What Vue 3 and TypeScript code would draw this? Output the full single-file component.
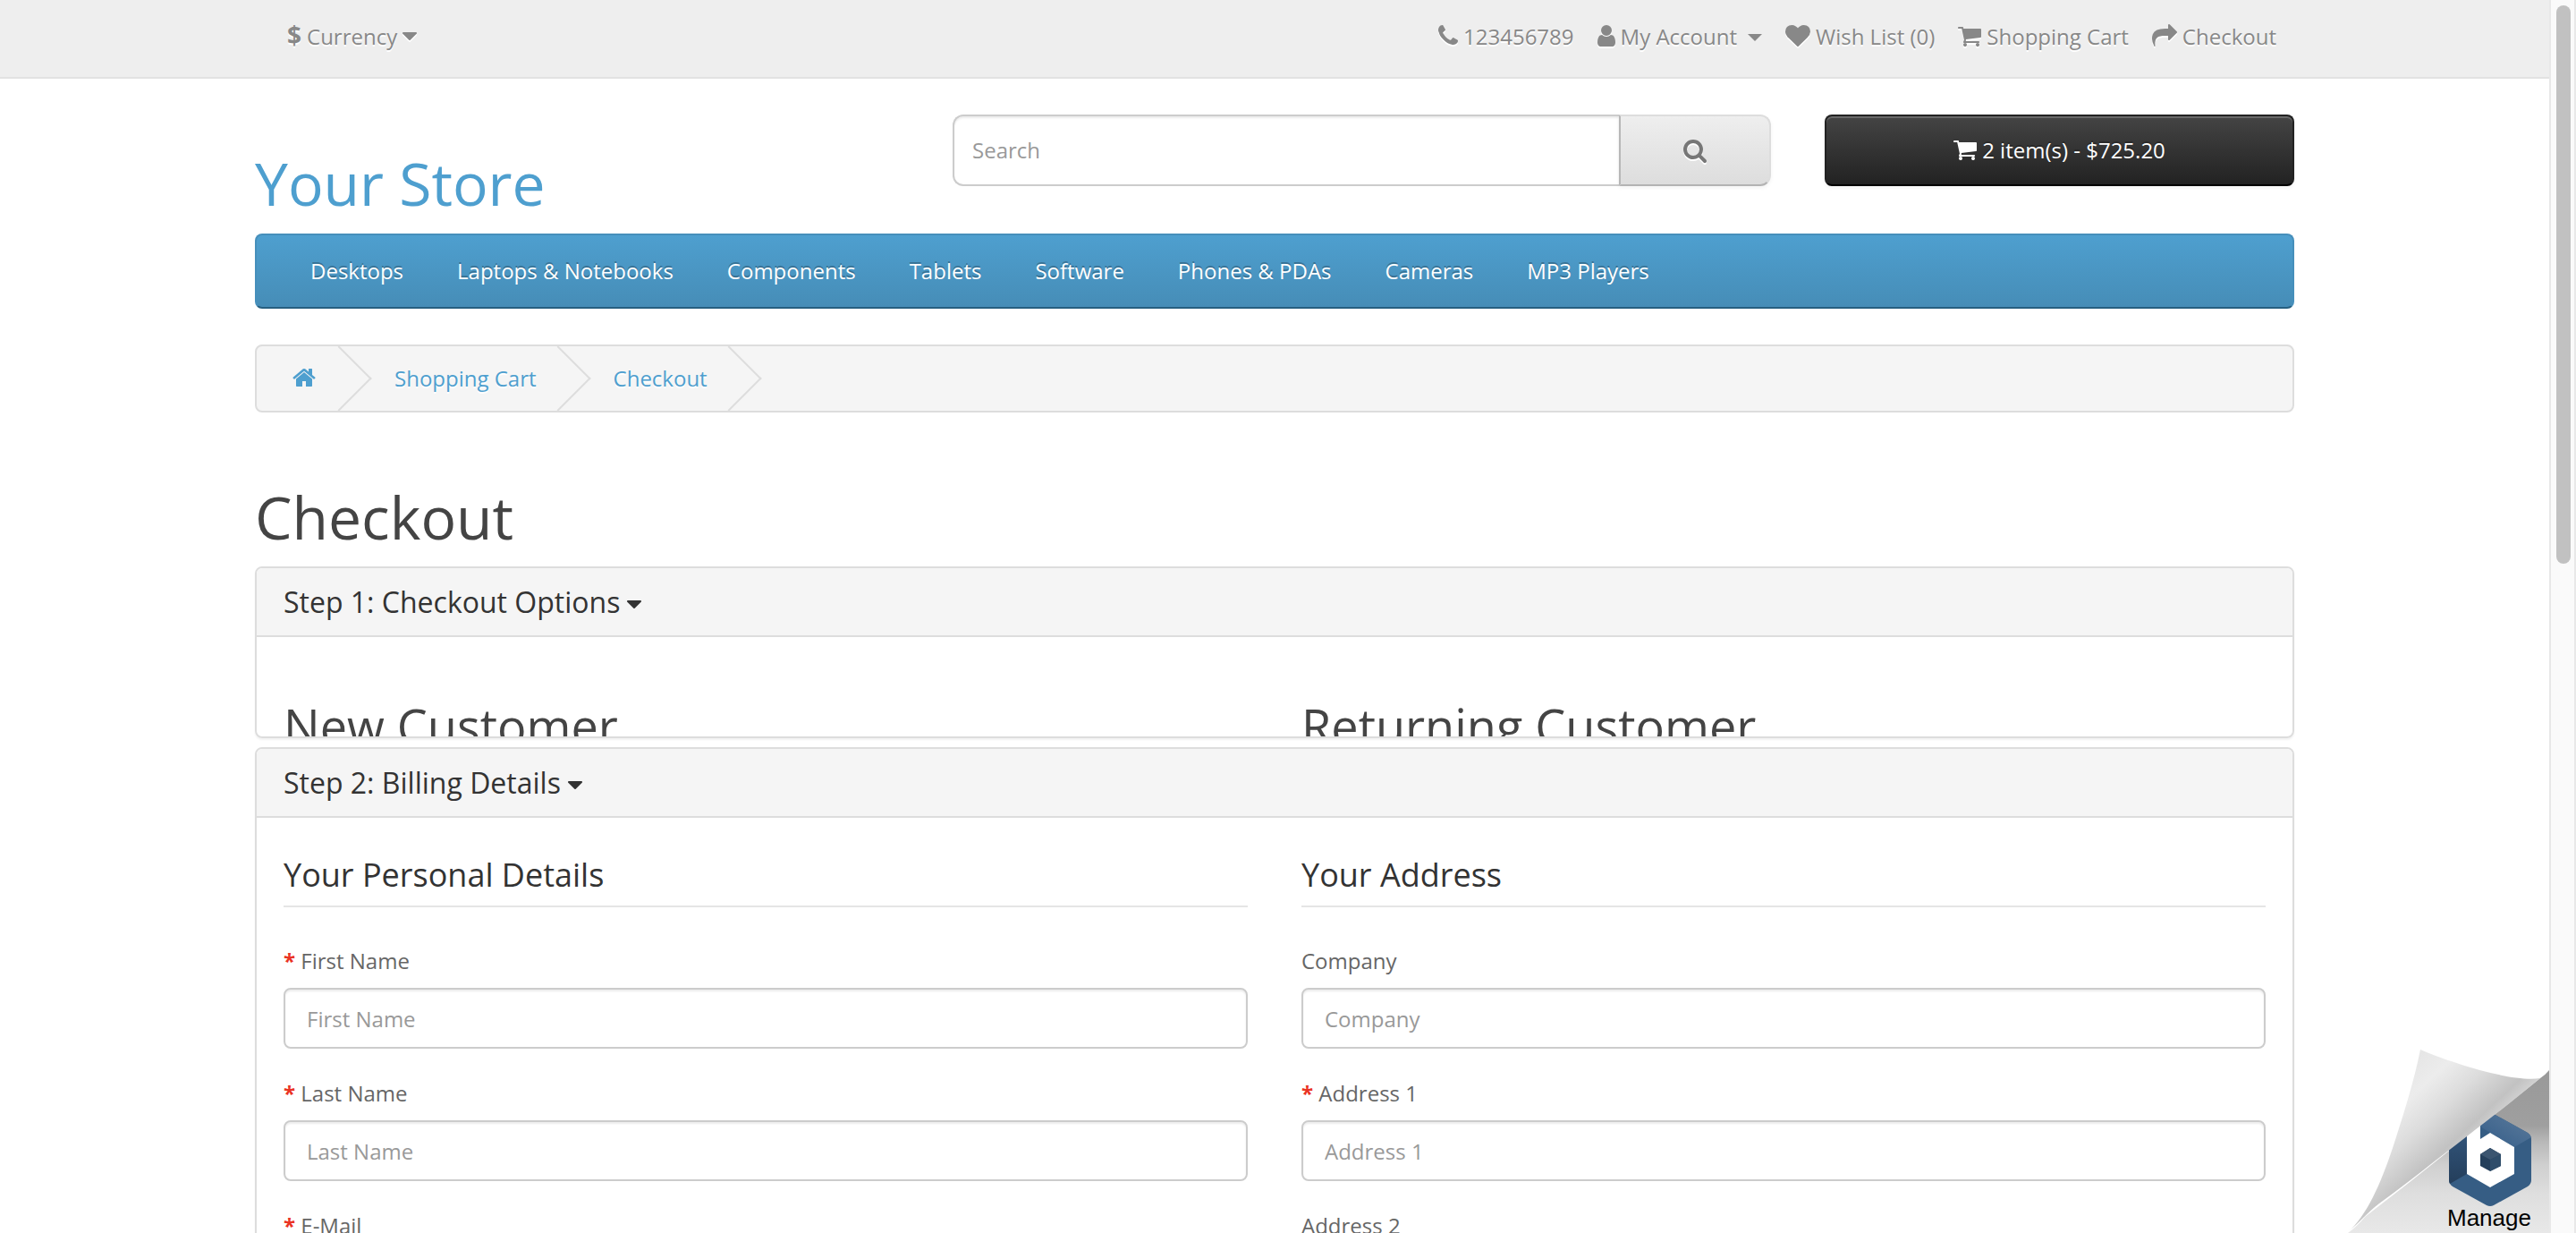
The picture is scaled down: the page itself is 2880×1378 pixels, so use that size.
<script setup lang="ts">
import { h, type FunctionalComponent } from 'vue'

interface Glyph {
  x: number
  w: number
  d: string
}

interface Field {
  id: string
  label: string
  type: string
  required: boolean
}

const glyphs: Record<string, Glyph> = {
  phone: {
    x: 192,
    w: 22,
    d: 'M1600 1240q0 27-10 70.500t-21 68.500q-21 50-122 106-94 51-186 51-27 0-53-3.500t-57-12.500-47-14.500-55.500-20.500-49.500-18q-98-35-175-83-127-79-264-216t-216-264q-48-77-83-175-3-9-18-49.500t-20.500-55.500-14.500-47-12.500-57-3.500-53q0-92 51-186 56-101 106-122 25-11 68.500-21t70.500-10q14 0 21 3 18 6 53 76 11 19 30 54t35 63.500 31 53.500q3 4 17.500 25t21.500 35.500 7 28.500q0 20-28.500 50t-62 55-62 53-28.500 46q0 9 5 22.500t8.500 20.500 14 24 11.500 19q76 137 174 235t235 174q2 1 19 11.500t24 14 20.500 8.500 22.500 5q18 0 46-28.500t53-62 55-62 50-28.500q14 0 28.500 7t35.500 21.500 25 17.500q25 15 53.500 31t63.500 35 54 30q70 35 76 53 3 7 3 21z',
  },
  user: {
    x: 256,
    w: 20,
    d: 'M1536 1399q0 109-62.500 187t-150.500 78h-854q-88 0-150.500-78t-62.500-187q0-85 8.500-160.500t31.500-152 58.500-131 94-89 134.500-34.500q131 128 313 128t313-128q76 0 134.500 34.500t94 89 58.500 131 31.500 152 8.500 160.500zm-256-887q0 159-112.500 271.500t-271.500 112.500-271.500-112.500-112.500-271.500 112.500-271.500 271.500-112.500 271.500 112.500 112.500 271.500z',
  },
  heart: {
    x: 0,
    w: 28,
    d: 'M896 1664q-26 0-44-18l-624-602q-10-8-27.500-26t-55.500-65.500-68-97.500-53.500-121-23.500-138q0-220 127-344t351-124q62 0 126.500 21.500t120 58 95.500 68.500 76 68q36-36 76-68t95.500-68.500 120-58 126.500-21.500q224 0 351 124t127 344q0 221-229 450l-623 600q-18 18-44 18z',
  },
  cart: {
    x: 64,
    w: 26,
    d: 'M704 1536q0 52-38 90t-90 38-90-38-38-90 38-90 90-38 90 38 38 90zm896 0q0 52-38 90t-90 38-90-38-38-90 38-90 90-38 90 38 38 90zm128-1088v512q0 24-16.500 42.500t-40.500 21.500l-1044 122q13 60 13 70 0 16-24 64h920q26 0 45 19t19 45-19 45-45 19h-1024q-26 0-45-19t-19-45q0-11 8-31.500t16-36 21.500-40 15.500-29.500l-177-823h-204q-26 0-45-19t-19-45 19-45 45-19h256q16 0 28.500 6.500t19.500 15.500 13 24.500 8 26 5.500 29.500 4.500 26h1201q26 0 45 19t19 45z',
  },
  share: {
    x: 0,
    w: 28,
    d: 'M1792 640q0 26-19 45l-512 512q-19 19-45 19t-45-19-19-45v-256h-224q-98 0-175.500 6t-154 21.500-133 42.500-105.500 69.500-80 101-48.500 138.500-17.500 181q0 55 5 123 0 6 2.500 23.500t2.500 26.500q0 15-8.500 25t-23.500 10q-16 0-28-17-7-9-13-22t-13.500-30-10.500-24q-127-285-127-451 0-199 53-333 162-403 875-403h224v-256q0-26 19-45t45-19 45 19l512 512q19 19 19 45z',
  },
  search: {
    x: 64,
    w: 26,
    d: 'M1216 832q0-185-131.500-316.500t-316.500-131.500-316.500 131.500-131.500 316.500 131.500 316.500 316.500 131.500 316.500-131.500 131.500-316.500zm512 832q0 52-38 90t-90 38q-54 0-90-38l-343-342q-179 124-399 124-143 0-273.500-55.500t-225-150-150-225-55.500-273.500 55.500-273.500 150-225 225-150 273.500-55.500 273.500 55.500 225 150 150 225 55.500 273.500q0 220-124 399l343 343q37 37 37 90z',
  },
  home: {
    x: 64,
    w: 28,
    d: 'M1472 992v480q0 26-19 45t-45 19h-384v-384h-256v384h-384q-26 0-45-19t-19-45v-480q0-1 .5-3t.5-3l575-474 575 474q1 2 1 6zm223-69l-62 74q-8 9-21 11h-3q-13 0-21-7l-692-577-692 577q-12 8-24 7-13-2-21-11l-62-74q-8-10-7-23.500t11-21.500l719-599q32-26 76-26t76 26l244 204v-195q0-14 9-23t23-9h192q14 0 23 9t9 23v408l219 182q10 8 11 21.500t-7 23.500z',
  },
  caret: {
    x: 384,
    w: 16,
    d: 'M1408 704q0 26-19 45l-448 448q-19 19-45 19t-45-19l-448-448q-19-19-19-45t19-45 45-19h896q26 0 45 19t19 45z',
  },
}

const Icon: FunctionalComponent<{ name: string }> = (props) => {
  const g = glyphs[props.name]
  return h(
    'svg',
    {
      class: 'icon',
      width: g.w,
      height: 28,
      viewBox: `${g.x} 0 ${g.w * 64} 1792`,
      'aria-hidden': 'true',
    },
    [h('path', { d: g.d })],
  )
}
Icon.props = ['name']

const topLinks = [
  { icon: 'phone', text: '123456789', menu: false },
  { icon: 'user', text: 'My Account', menu: true },
  { icon: 'heart', text: 'Wish List (0)', menu: false },
  { icon: 'cart', text: 'Shopping Cart', menu: false },
  { icon: 'share', text: 'Checkout', menu: false },
]

const categories = [
  'Desktops',
  'Laptops & Notebooks',
  'Components',
  'Tablets',
  'Software',
  'Phones & PDAs',
  'Cameras',
  'MP3 Players',
]

const billing: { legend: string; fields: Field[] }[] = [
  {
    legend: 'Your Personal Details',
    fields: [
      { id: 'firstname', label: 'First Name', type: 'text', required: true },
      { id: 'lastname', label: 'Last Name', type: 'text', required: true },
      { id: 'email', label: 'E-Mail', type: 'email', required: true },
    ],
  },
  {
    legend: 'Your Address',
    fields: [
      { id: 'company', label: 'Company', type: 'text', required: false },
      { id: 'address-1', label: 'Address 1', type: 'text', required: true },
      { id: 'address-2', label: 'Address 2', type: 'text', required: false },
    ],
  },
]
</script>

<template>
  <div class="shell">
    <div class="page">
      <nav class="top">
        <div class="container top-row">
          <button type="button" class="currency">
            <strong>$</strong><span>Currency</span><Icon name="caret" />
          </button>
          <ul class="top-links">
            <li v-for="link in topLinks" :key="link.text">
              <a href="#"><Icon :name="link.icon" /><span>{{ link.text }}</span><i v-if="link.menu" class="menu-caret"></i></a>
            </li>
          </ul>
        </div>
      </nav>

      <header class="container header">
        <h1 class="logo"><a href="#">Your Store</a></h1>
        <form class="search" @submit.prevent>
          <input type="text" placeholder="Search" aria-label="Search" />
          <button type="submit" aria-label="Search"><Icon name="search" /></button>
        </form>
        <button type="button" class="cart"><Icon name="cart" /><span>2 item(s) - $725.20</span></button>
      </header>

      <div class="container">
        <nav class="menu">
          <a v-for="name in categories" :key="name" href="#">{{ name }}</a>
        </nav>

        <ul class="breadcrumb">
          <li><a href="#" aria-label="Home"><Icon name="home" /></a></li>
          <li><a href="#">Shopping Cart</a></li>
          <li><a href="#">Checkout</a></li>
        </ul>

        <h1 class="title">Checkout</h1>

        <section class="panel">
          <h4 class="panel-heading"><a href="#">Step 1: Checkout Options<Icon name="caret" /></a></h4>
          <div class="panel-body columns collapsing">
            <h2>New Customer</h2>
            <h2>Returning Customer</h2>
          </div>
        </section>

        <section class="panel">
          <h4 class="panel-heading"><a href="#">Step 2: Billing Details<Icon name="caret" /></a></h4>
          <form class="panel-body columns" @submit.prevent>
            <fieldset v-for="group in billing" :key="group.legend">
              <legend>{{ group.legend }}</legend>
              <div v-for="field in group.fields" :key="field.id" class="field">
                <label :for="field.id" :class="{ required: field.required }">{{ field.label }}</label>
                <input :id="field.id" :type="field.type" :placeholder="field.label" />
              </div>
            </fieldset>
          </form>
        </section>
      </div>
    </div>

    <div class="rail" aria-hidden="true"><div class="thumb"></div></div>

    <button type="button" class="manage">
      <svg width="226" height="206" viewBox="0 0 226 206">
        <defs>
          <linearGradient id="under" x1="0" y1="0" x2="0" y2="1">
            <stop offset="0" stop-color="#999" />
            <stop offset=".34" stop-color="#9f9f9f" />
            <stop offset=".44" stop-color="#b8b8b8" />
            <stop offset=".58" stop-color="#cfcfcf" />
            <stop offset=".76" stop-color="#dedede" />
            <stop offset="1" stop-color="#e8e8e8" />
          </linearGradient>
          <linearGradient id="peel" gradientUnits="userSpaceOnUse" x1="68" y1="20" x2="142" y2="100">
            <stop offset="0" stop-color="#e6e6e6" />
            <stop offset=".25" stop-color="#ececec" />
            <stop offset=".55" stop-color="#dcdcdc" />
            <stop offset=".88" stop-color="#c2c2c2" />
            <stop offset="1" stop-color="#d0d0d0" />
          </linearGradient>
          <linearGradient id="hexTop" x1="0" y1="1" x2="1" y2="0">
            <stop offset="0" stop-color="#335c88" />
            <stop offset="1" stop-color="#5d7c9c" />
          </linearGradient>
          <linearGradient id="hexLeft" x1="0" y1="0" x2="0" y2="1">
            <stop offset="0" stop-color="#34587f" />
            <stop offset="1" stop-color="#243e5b" />
          </linearGradient>
        </defs>
        <path d="M216 33Q222 29 226 24V206H1Q12 198 20 188L69 150Z" fill="url(#under)" />
        <path d="M156 73Q160 71 164 73L202 94Q206 97 206 101V147Q206 151 202 154L164 175Q160 177 156 175L118 154Q114 151 114 147V101Q114 97 118 94Z" fill="#365d84" />
        <path d="M156 73Q160 71 164 73L202 94Q205 96 206 99L187 110 160 94 149 87V76Z" fill="url(#hexTop)" />
        <path d="M134 85V140L115 151Q114 149 114 147V101Q114 97 118 94Z" fill="url(#hexLeft)" />
        <path d="M134 80H149V101L160 94 187 110V140L160 155 134 140Z" fill="#fff" />
        <path d="M160 111L172 118V131L160 137 149 131V118Z" fill="#243f5b" />
        <path d="M160 124L172 118V131L160 137Z" fill="#2f4d6a" />
        <path d="M160 111L172 118 160 124 149 118Z" fill="#3b5570" />
        <path d="M82 1C120 17 186 38 216 33C190 55 160 78 134 98C100 124 70 148 36 173C24 182 14 194 1 205C22 187 38 150 51 111C63 74 74 40 82 1Z" fill="url(#peel)" />
        <text x="112" y="198">Manage</text>
      </svg>
    </button>
  </div>
</template>

<style>
body {
  margin: 0;
  overflow: hidden;
}
</style>

<style scoped>
.shell {
  position: relative;
  display: grid;
  grid-template-columns: minmax(0, 1fr) 30px;
  height: 100vh;
  background: #fff;
  color: #666;
  font: 24px/40px 'Open Sans', sans-serif;
}

.shell *,
.shell *::before,
.shell *::after {
  box-sizing: border-box;
}

.page {
  overflow-y: auto;
  scrollbar-width: none;
}

.container {
  max-width: 2340px;
  margin: 0 auto;
  padding: 0 30px;
}

a {
  color: inherit;
  text-decoration: none;
}

button,
input {
  margin: 0;
  font: inherit;
}

ul {
  margin: 0;
  padding: 0;
  list-style: none;
}

h1,
h2,
h4 {
  margin: 0;
  font-weight: 400;
}

.icon {
  display: inline-block;
  vertical-align: -4px;
  fill: currentColor;
}

/* top bar */
.top {
  padding: 21px 0 25px;
  border-bottom: 2px solid #e2e2e2;
  background: #eee;
  color: #888;
  text-shadow: 0 2px 0 #fff;
}

.top .icon {
  filter: drop-shadow(0 2px 0 #fff);
}

.top-row {
  display: flex;
  justify-content: space-between;
}

.currency {
  height: 40px;
  margin-left: 36px;
  padding: 0;
  border: 0;
  background: none;
  color: inherit;
  text-shadow: inherit;
}

.currency strong {
  font-size: 28px;
  line-height: 28px;
}

.currency span {
  margin: 0 6px;
}

.top-links {
  display: flex;
  gap: 26px;
  height: 40px;
  margin-right: 20px;
}

.top-links .icon,
.cart .icon {
  margin-right: 6px;
}

.menu-caret {
  display: inline-block;
  margin-left: 12px;
  border: 8px solid transparent;
  border-top-color: currentColor;
  border-bottom: 0;
  vertical-align: 4px;
}

/* header */
.header {
  display: grid;
  grid-template-columns: 4fr 5fr 3fr;
  padding: 40px 0 20px;
}

.header > * {
  margin: 0 30px;
}

.header .logo {
  margin-top: 40px;
  color: #4e9fcf;
  font-size: 66px;
  line-height: 73px;
}

.title {
  margin: 80px 0 20px;
  color: #444;
  font-size: 66px;
  line-height: 72px;
}

.search {
  display: flex;
  height: 80px;
}

.search input {
  flex: 1;
  min-width: 0;
  padding: 0 20px;
  border: 2px solid #ccc;
  border-right: 0;
  border-radius: 12px 0 0 12px;
  box-shadow: inset 0 2px 2px rgba(0, 0, 0, 0.075);
}

.search button {
  width: 170px;
  padding: 0;
  border: 2px solid;
  border-color: #ddd #ddd #b3b3b3 #b7b7b7;
  border-radius: 0 12px 12px 0;
  background: linear-gradient(#eee, #ddd);
  box-shadow: 0 2px 4px rgba(0, 0, 0, 0.05);
  color: #777;
}

.search .icon {
  display: block;
  margin: 0 auto;
  filter: drop-shadow(0 2px 0 #fff);
}

.cart {
  height: 80px;
  padding: 0;
  border: 2px solid;
  border-color: #222 #222 #000;
  border-radius: 8px;
  background: linear-gradient(#444, #222);
  box-shadow: inset 0 2px 0 rgba(255, 255, 255, 0.2), 0 2px 4px rgba(0, 0, 0, 0.05);
  color: #fff;
  text-shadow: 0 -2px 0 rgba(0, 0, 0, 0.25);
}

.menu {
  display: flex;
  padding: 20px 30px;
  border: 2px solid;
  border-color: #468fbb #468fbb #265f80;
  border-radius: 8px;
  background: linear-gradient(#4e9fcf, #468db7);
  color: #fff;
  text-shadow: 0 -2px 0 rgba(0, 0, 0, 0.25);
}

.menu a {
  padding: 0 30px;
}

.breadcrumb {
  display: flex;
  gap: 6px;
  height: 76px;
  margin-top: 40px;
  overflow: hidden;
  border: 2px solid #ddd;
  border-radius: 8px;
  background: #f5f5f5;
  color: #4e9fcf;
  line-height: 72px;
  text-shadow: 0 2px 0 #fff;
}

.breadcrumb li {
  position: relative;
  padding: 0 40px;
}

/* arrow divider that overlaps the next crumb */
.breadcrumb li::after {
  content: '';
  position: absolute;
  top: 10px;
  right: -10px;
  width: 52px;
  height: 52px;
  border-top: 2px solid #ddd;
  border-right: 2px solid #ddd;
  transform: rotate(45deg);
  pointer-events: none;
}

.panel {
  margin-bottom: 10px;
  border: 2px solid #ddd;
  border-radius: 8px;
  box-shadow: 0 2px 2px rgba(0, 0, 0, 0.05);
}

.panel-heading {
  padding: 20px 30px;
  border-bottom: 2px solid #ddd;
  border-radius: 6px 6px 0 0;
  background: #f5f5f5;
  color: #333;
  font-size: 32px;
  line-height: 35px;
}

.panel-heading a {
  display: block;
  height: 35px;
}

.panel-heading .icon {
  margin-left: 8px;
}

.panel-body {
  padding: 30px;
}

.columns {
  display: grid;
  grid-template-columns: 1fr 1fr;
  gap: 60px;
}

.collapsing {
  height: 111px;
  padding-top: 70px;
  overflow: hidden;
}

.collapsing h2 {
  color: #444;
  font-size: 54px;
  line-height: 58px;
}

fieldset {
  min-width: 0;
  margin: 0;
  padding: 0;
  border: 0;
}

legend {
  width: 100%;
  margin-bottom: 40px;
  padding: 14px 0;
  border-bottom: 2px solid #e5e5e5;
  color: #333;
  font-size: 36px;
}

.field {
  margin-bottom: 30px;
}

.field label {
  display: block;
  margin-bottom: 10px;
}

.required::before {
  content: '* ';
  color: #ea3323;
  font-weight: 700;
}

.field input {
  display: block;
  width: 100%;
  height: 68px;
  padding: 0 24px;
  border: 2px solid #ccc;
  border-radius: 8px;
  box-shadow: inset 0 2px 2px rgba(0, 0, 0, 0.075);
}

input::placeholder {
  color: #999;
  opacity: 1;
}

.rail {
  padding: 6px 4px 6px 6px;
  border: solid #e8e8e8;
  border-width: 0 2px;
  background: #fafafa;
}

.thumb {
  width: 16px;
  height: 45.7%;
  border-radius: 8px;
  background: #c1c1c1;
}

.manage {
  position: absolute;
  right: 30px;
  bottom: 0;
  padding: 0;
  border: 0;
  background: none;
}

.manage svg {
  display: block;
}

.manage text {
  fill: #000;
  font: 26px 'Liberation Sans', sans-serif;
}
</style>
